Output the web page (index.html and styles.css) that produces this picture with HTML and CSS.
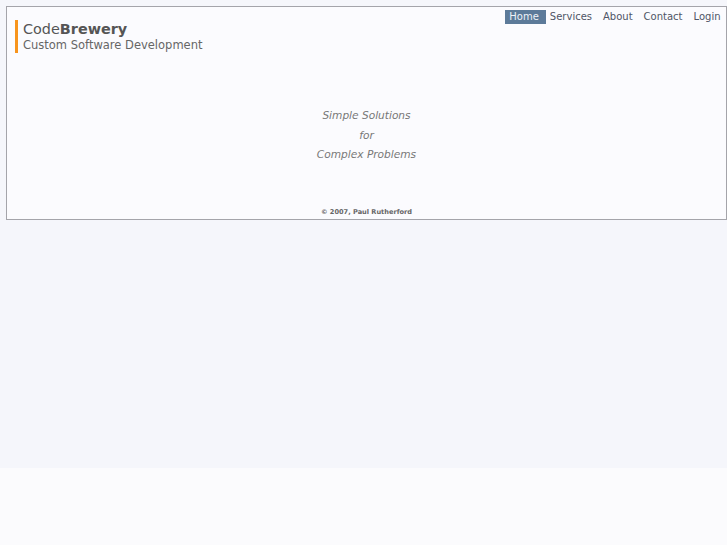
FILE: index.html
```html
<!DOCTYPE html>
<html>
<head>
<meta charset="utf-8">
<title>CodeBrewery</title>
<link rel="stylesheet" href="styles.css">
</head>
<body>
<div class="bg">
  <div class="page">
    <header class="header">
      <div class="brand">
        <div class="logo">Code<b>Brewery</b></div>
        <div class="sub">Custom Software Development</div>
      </div>
      <nav class="nav">
        <a class="active" href="#">Home</a>
        <a href="#">Services</a>
        <a href="#">About</a>
        <a href="#">Contact</a>
        <a href="#">Login</a>
      </nav>
    </header>
    <main class="tagline">
      <p>Simple Solutions</p>
      <p>for</p>
      <p>Complex Problems</p>
    </main>
    <footer class="footer">© 2007, Paul Rutherford</footer>
  </div>
</div>
</body>
</html>
```
FILE: styles.css
```css
html { background: #fbfbfd; }
body { margin: 0; font-family: "DejaVu Sans", Verdana, sans-serif; }
.bg { background: #f5f6fb; height: 468px; padding: 6px 0 0 6px; box-sizing: border-box; }
.page { background: #fbfbfe; border: 1px solid #a4a4aa; height: 214px; box-sizing: border-box; display: flex; flex-direction: column; }
.header { display: flex; justify-content: space-between; align-items: flex-start; padding: 3px 0 0 8px; }
.brand { margin-top: 10px; border-left: 3px solid #f7941d; padding: 0 0 0 5px; height: 33px; }
.logo { font-size: 14.4px; color: #555; line-height: 17px; padding-top: 1px; }
.logo b { font-weight: bold; }
.sub { font-size: 11.5px; color: #666; line-height: 14px; }
.nav { display: flex; }
.nav a { font-size: 10px; color: #4f5566; text-decoration: none; padding: 0 5.5px; line-height: 14px; }
.nav a.active { background: #5c7a99; color: #eef2f7; padding: 0 7px 0 4px; margin-right: -1.5px; }
.tagline { text-align: center; font-style: italic; color: #777; font-size: 10.6px; line-height: 19.5px; margin-top: 53px; }
.tagline p { margin: 0; }
.footer { margin-top: auto; text-align: center; font-size: 6.6px; font-weight: bold; color: #666; padding-bottom: 2px; line-height: 10px; }
```
